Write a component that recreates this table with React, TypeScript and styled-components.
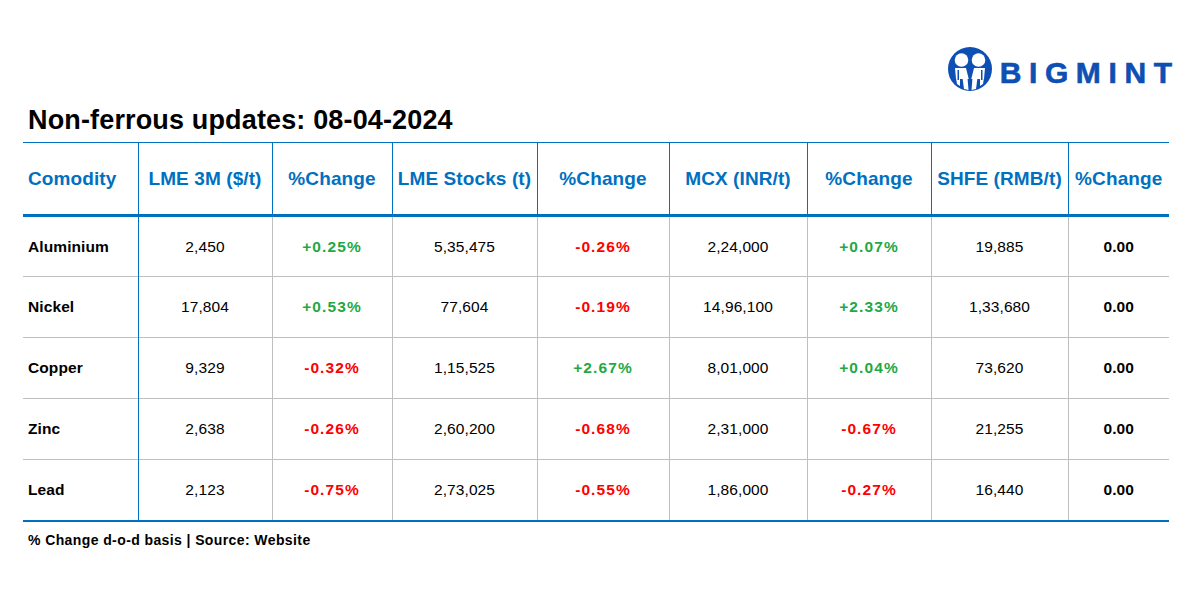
import React from "react";
import styled, { createGlobalStyle } from "styled-components";

const Global = createGlobalStyle`
  html, body { margin: 0; padding: 0; background: #fff; }
  body { font-family: "Liberation Sans", Arial, sans-serif; color: #000; }
`;

const Page = styled.div`
  width: 1200px;
  height: 600px;
  box-sizing: border-box;
  padding: 46px 28px 0 23px;
  display: flex;
  flex-direction: column;
`;

const TopBar = styled.div`
  display: flex;
  justify-content: flex-end;
  height: 46px;
`;

const Logo = styled.div`
  display: flex;
  align-items: center;
  gap: 7px;
  height: 46px;
`;

const LogoText = styled.span`
  font-family: "Liberation Sans", Arial, sans-serif;
  font-weight: 700;
  font-size: 30px;
  line-height: 30px;
  letter-spacing: 7.6px;
  margin-right: -7.6px;
  color: #0d4fb3;
  margin-top: 8px;
  -webkit-text-stroke: 0.6px #0d4fb3;
`;

const Title = styled.h1`
  margin: 12px 0 6px 5px;
  font-size: 27px;
  line-height: 32px;
  font-weight: 700;
  letter-spacing: 0.15px;
`;

const Table = styled.table`
  border-collapse: collapse;
  table-layout: fixed;
  width: 1146px;
`;

const HeadRow = styled.tr`
  height: 73px;
  border-top: 1px solid #0070c0;
  border-bottom: 3px solid #0070c0;
`;

const Th = styled.th<{ $left?: boolean; $last?: boolean }>`
  font-size: 19px;
  font-weight: 700;
  color: #0070c0;
  text-align: ${(p) => (p.$left ? "left" : "center")};
  padding: 0 ${(p) => (p.$left ? "5px" : "0")};
  border-right: ${(p) => (p.$last ? "none" : "1px solid #0070c0")};
  white-space: nowrap;
  vertical-align: middle;
  letter-spacing: 0.1px;
`;

const Row = styled.tr<{ $last?: boolean }>`
  height: 61px;
  border-bottom: ${(p) => (p.$last ? "2px solid #0070c0" : "1px solid #bfbfbf")};
`;

const Td = styled.td<{ $tone?: "up" | "down" | "bold" | "plain"; $left?: boolean; $first?: boolean; $last?: boolean }>`
  font-size: 15.5px;
  font-weight: ${(p) => (p.$tone === "plain" ? 400 : 700)};
  color: ${(p) =>
    p.$tone === "up" ? "#1fa843" : p.$tone === "down" ? "#ff0000" : "#000"};
  text-align: ${(p) => (p.$left ? "left" : "center")};
  padding: 0 ${(p) => (p.$left ? "5px" : "0")};
  border-right: ${(p) =>
    p.$last ? "none" : p.$first ? "1px solid #0070c0" : "1px solid #bfbfbf"};
  letter-spacing: ${(p) => (p.$tone === "up" || p.$tone === "down" ? "1.1px" : "0.1px")};
`;

const Footer = styled.div`
  margin: 10px 0 0 5px;
  font-size: 14px;
  font-weight: 700;
  letter-spacing: 0.4px;
`;

const widths = [115, 134, 120, 145, 132, 138, 124, 137, 101];
const headers = [
  "Comodity",
  "LME 3M ($/t)",
  "%Change",
  "LME Stocks (t)",
  "%Change",
  "MCX (INR/t)",
  "%Change",
  "SHFE (RMB/t)",
  "%Change",
];

const rows: string[][] = [
  ["Aluminium", "2,450", "+0.25%", "5,35,475", "-0.26%", "2,24,000", "+0.07%", "19,885", "0.00"],
  ["Nickel", "17,804", "+0.53%", "77,604", "-0.19%", "14,96,100", "+2.33%", "1,33,680", "0.00"],
  ["Copper", "9,329", "-0.32%", "1,15,525", "+2.67%", "8,01,000", "+0.04%", "73,620", "0.00"],
  ["Zinc", "2,638", "-0.26%", "2,60,200", "-0.68%", "2,31,000", "-0.67%", "21,255", "0.00"],
  ["Lead", "2,123", "-0.75%", "2,73,025", "-0.55%", "1,86,000", "-0.27%", "16,440", "0.00"],
];

const toneOf = (v: string, i: number): "up" | "down" | "bold" | "plain" => {
  if (i === 0 || i === 8) return "bold";
  if (v.startsWith("+")) return "up";
  if (v.startsWith("-")) return "down";
  return "plain";
};

const BLUE = "#0d4fb3";

const LogoMark = () => (
  <svg width="46" height="46" viewBox="-23 -23 46 46">
    <circle cx="0" cy="0" r="22" fill={BLUE} />
    <circle cx="-8.5" cy="-9" r="6.8" fill="#fff" />
    <circle cx="8.5" cy="-9" r="6.8" fill="#fff" />
    <path d="M-15 -1 L-3.5 -1 L0 4 L3.5 -1 L15 -1 L14 10 L-14 10 Z" fill="#fff" />
    <path d="M-4 -1 L4 -1 L0 15 Z" fill={BLUE} />
    <path d="M-14 9 L-10 9 L-10 17 L-13 15 Z" fill="#fff" />
    <path d="M14 9 L10 9 L10 17 L13 15 Z" fill="#fff" />
    <path d="M-7.5 9 L-2.5 9 L-1.5 21 L-6 20 Z" fill="#fff" />
    <path d="M7.5 9 L2.5 9 L1.5 21 L6 20 Z" fill="#fff" />
    <path d="M-12.5 1 L-11 1 L-11 11 L-12.5 11 Z" fill={BLUE} />
    <path d="M11 1 L12.5 1 L12.5 11 L11 11 Z" fill={BLUE} />
  </svg>
);

export default function App() {
  return (
    <Page>
      <Global />
      <TopBar>
        <Logo>
          <LogoMark />
          <LogoText>BIGMINT</LogoText>
        </Logo>
      </TopBar>
      <Title>Non-ferrous updates: 08-04-2024</Title>
      <Table>
        <colgroup>
          {widths.map((w, i) => (
            <col key={i} style={{ width: w }} />
          ))}
        </colgroup>
        <thead>
          <HeadRow>
            {headers.map((h, i) => (
              <Th key={i} $left={i === 0} $last={i === headers.length - 1}>
                {h}
              </Th>
            ))}
          </HeadRow>
        </thead>
        <tbody>
          {rows.map((r, ri) => (
            <Row key={ri} $last={ri === rows.length - 1}>
              {r.map((v, i) => (
                <Td
                  key={i}
                  $tone={toneOf(v, i)}
                  $left={i === 0}
                  $first={i === 0}
                  $last={i === r.length - 1}
                >
                  {v}
                </Td>
              ))}
            </Row>
          ))}
        </tbody>
      </Table>
      <Footer>% Change d-o-d basis | Source: Website</Footer>
    </Page>
  );
}
